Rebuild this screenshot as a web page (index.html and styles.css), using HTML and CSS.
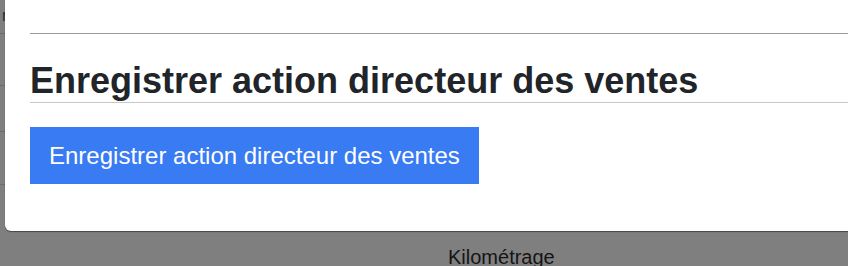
FILE: index.html
```html
<!DOCTYPE html>
<html lang="fr">
<head>
    <meta charset="UTF-8">
    <meta name="viewport" content="width=device-width, initial-scale=1.0">
    <title>Enregistrer action directeur des ventes</title>
    <link rel="stylesheet" href="styles.css">
</head>
<body>
    <div class="page">
        <table class="list">
            <tr><td>n</td></tr>
            <tr><td>&nbsp;</td></tr>
            <tr><td>&nbsp;</td></tr>
            <tr><td>&nbsp;</td></tr>
        </table>
        <p class="field-label">Kilométrage</p>
    </div>

    <div class="modal">
        <hr class="modal-rule">
        <h2 class="modal-title">Enregistrer action directeur des ventes</h2>
        <button type="button" class="btn-primary">Enregistrer action directeur des ventes</button>
    </div>
</body>
</html>
```

FILE: styles.css
```css
body {
    font-family: "Liberation Sans", Arial, sans-serif;
    background-color: #7f7f7f;
    color: #1b1b1b;
    margin: 0;
    padding: 0;
    overflow: hidden;
}
.page {
    position: relative;
    height: 266px;
}
.list {
    border-collapse: collapse;
    width: 40px;
}
.list td {
    border-bottom: 1px solid #6c6c6c;
    font-size: 16px;
    color: #2a2a2a;
    padding: 0 0 0 2px;
    box-sizing: border-box;
    vertical-align: top;
}
.list tr:nth-child(1) td {
    height: 33px;
    vertical-align: middle;
}
.list tr:nth-child(2) td {
    height: 52px;
}
.list tr:nth-child(3) td {
    height: 46px;
}
.list tr:nth-child(4) td {
    height: 53px;
}
.field-label {
    position: absolute;
    left: 448px;
    top: 246px;
    margin: 0;
    font-size: 20px;
    line-height: 23px;
    color: #151515;
}
.modal {
    position: absolute;
    top: 0;
    left: 5px;
    right: -20px;
    height: 231px;
    background-color: white;
    border-radius: 0 0 6px 6px;
    box-shadow: 0 1px 1px rgba(0, 0, 0, 0.45);
    padding: 33px 0 0 25px;
    box-sizing: border-box;
}
.modal-rule {
    margin: 0;
    border: 0;
    border-top: 1px solid #9b9b9b;
}
.modal-title {
    margin: 25px 0 0 0;
    font-size: 36px;
    line-height: 43px;
    font-weight: bold;
    color: #212529;
    border-bottom: 1px solid #c8c8c8;
}
.btn-primary {
    display: inline-block;
    margin-top: 24px;
    padding: 14px 19px;
    font-family: inherit;
    font-size: 24px;
    line-height: 29px;
    color: white;
    background-color: #387bf3;
    border: none;
    border-radius: 0;
}
```
